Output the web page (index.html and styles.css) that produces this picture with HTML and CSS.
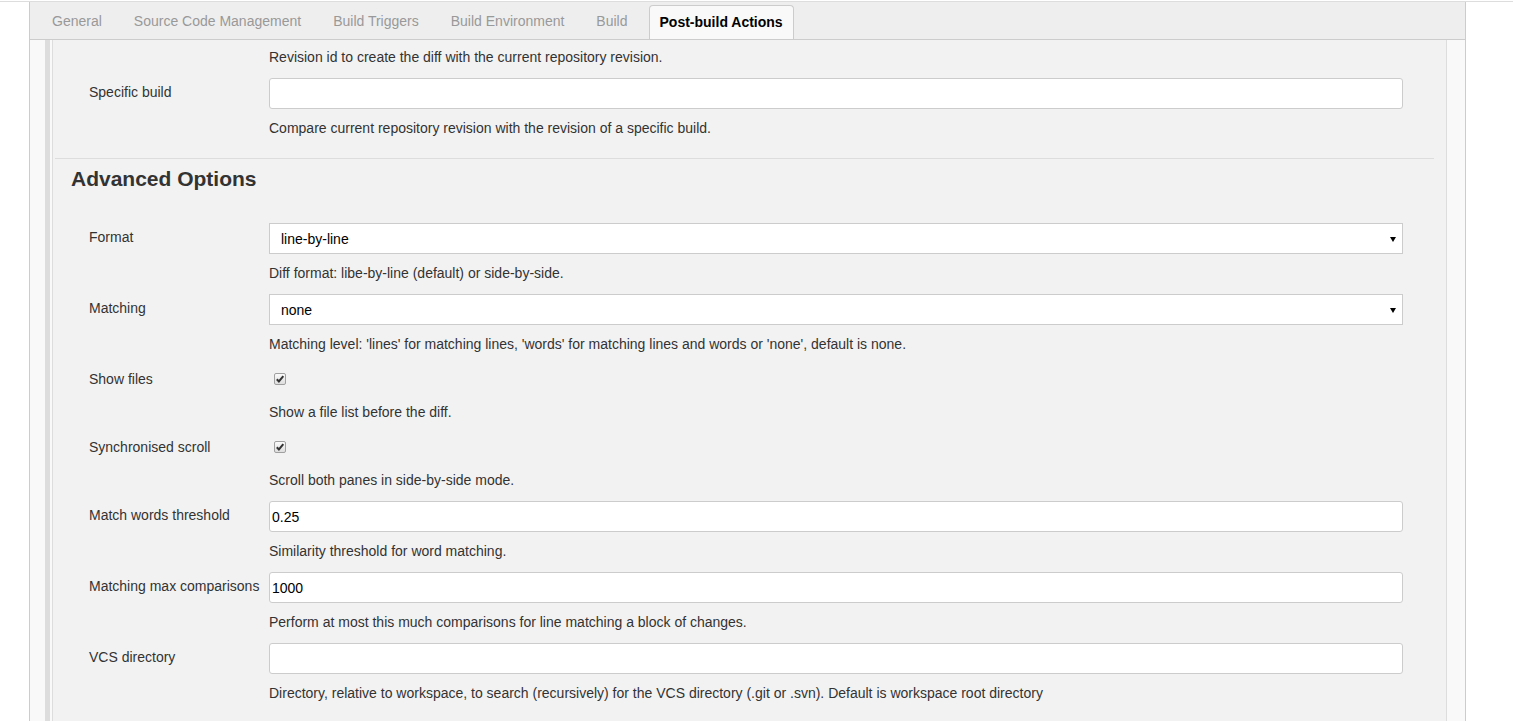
FILE: index.html
```html
<!DOCTYPE html>
<html>
<head>
<meta charset="utf-8">
<link rel="stylesheet" href="styles.css">
</head>
<body>
<div class="topline"></div>
<div class="panel">
  <div class="tabbar">
    <div class="tab">General</div>
    <div class="tab">Source Code Management</div>
    <div class="tab">Build Triggers</div>
    <div class="tab">Build Environment</div>
    <div class="tab">Build</div>
    <div class="tab active">Post-build Actions</div>
  </div>
  <div class="section">
    <div class="inner">
      <div class="desc first">Revision id to create the diff with the current repository revision.</div>
      <div class="row">
        <div class="label">Specific build</div>
        <div class="field"><input class="text" type="text" value=""></div>
      </div>
      <div class="desc">Compare current repository revision with the revision of a specific build.</div>
      <div class="separator"></div>
      <h2 class="heading">Advanced Options</h2>
      <div class="row">
        <div class="label">Format</div>
        <div class="field">
          <div class="select"><span class="value">line-by-line</span><span class="arrow"></span></div>
        </div>
      </div>
      <div class="desc">Diff format: libe-by-line (default) or side-by-side.</div>
      <div class="row">
        <div class="label">Matching</div>
        <div class="field">
          <div class="select"><span class="value">none</span><span class="arrow"></span></div>
        </div>
      </div>
      <div class="desc">Matching level: 'lines' for matching lines, 'words' for matching lines and words or 'none', default is none.</div>
      <div class="row check-row">
        <div class="label">Show files</div>
        <div class="field"><span class="checkbox"><svg width="10" height="10" viewBox="0 0 10 10"><path d="M1.8 5.2 L3.9 7.4 L8.3 2.1" fill="none" stroke="#333" stroke-width="2"/></svg></span></div>
      </div>
      <div class="desc">Show a file list before the diff.</div>
      <div class="row check-row">
        <div class="label">Synchronised scroll</div>
        <div class="field"><span class="checkbox"><svg width="10" height="10" viewBox="0 0 10 10"><path d="M1.8 5.2 L3.9 7.4 L8.3 2.1" fill="none" stroke="#333" stroke-width="2"/></svg></span></div>
      </div>
      <div class="desc">Scroll both panes in side-by-side mode.</div>
      <div class="row">
        <div class="label">Match words threshold</div>
        <div class="field"><input class="text" type="text" value="0.25"></div>
      </div>
      <div class="desc">Similarity threshold for word matching.</div>
      <div class="row">
        <div class="label">Matching max comparisons</div>
        <div class="field"><input class="text" type="text" value="1000"></div>
      </div>
      <div class="desc">Perform at most this much comparisons for line matching a block of changes.</div>
      <div class="row">
        <div class="label">VCS directory</div>
        <div class="field"><input class="text" type="text" value=""></div>
      </div>
      <div class="desc">Directory, relative to workspace, to search (recursively) for the VCS directory (.git or .svn). Default is workspace root directory</div>
    </div>
  </div>
</div>
</body>
</html>
```

FILE: styles.css
```css
html, body {
  margin: 0;
  padding: 0;
  background: #ffffff;
  font-family: "Liberation Sans", Arial, sans-serif;
  font-size: 14px;
  color: #333333;
}
body {
  padding-top: 1px;
  height: 720px;
  overflow: hidden;
}
.topline {
  border-top: 1px solid #dddddd;
}
.panel {
  margin-left: 29px;
  width: 1435px;
  border-left: 1px solid #cccccc;
  border-right: 1px solid #cccccc;
  background: #f9f9f9;
  min-height: 719px;
}
.tabbar {
  display: flex;
  align-items: flex-end;
  gap: 10px;
  height: 37px;
  padding-left: 11px;
  background: #eeeeee;
  border-bottom: 1px solid #cccccc;
}
.tab {
  height: 34px;
  line-height: 33px;
  padding: 0 11px;
  color: #999999;
  white-space: nowrap;
  box-sizing: border-box;
}
.tab.active {
  padding: 0 10px;
  border: 1px solid #cccccc;
  border-bottom: none;
  border-radius: 4px 4px 0 0;
  background: #f9f9f9;
  color: #000000;
  font-weight: bold;
}
.section {
  margin-left: 15px;
  margin-right: 18px;
  border-left: 5px solid #dddddd;
  padding-left: 2px;
}
.inner {
  background: #f2f2f2;
  border-left: 1px solid #dddddd;
  border-right: 1px solid #dddddd;
  padding-bottom: 40px;
}
.row {
  display: flex;
  align-items: flex-start;
  height: 31px;
}
.label {
  width: 216px;
  flex: 0 0 216px;
  box-sizing: border-box;
  padding-left: 36px;
  padding-top: 6px;
  line-height: 17px;
  color: #333333;
  white-space: nowrap;
}
.field {
  width: 1134px;
  flex: 0 0 1134px;
}
.text {
  display: block;
  width: 100%;
  height: 31px;
  box-sizing: border-box;
  margin: 0;
  border: 1px solid #cccccc;
  border-radius: 3px;
  background: #ffffff;
  padding: 0 2px;
  font-family: "Liberation Sans", Arial, sans-serif;
  font-size: 14px;
  color: #000000;
  outline: none;
}
.select {
  position: relative;
  height: 31px;
  box-sizing: border-box;
  border: 1px solid #cccccc;
  background: #ffffff;
  padding-left: 11px;
  line-height: 30px;
  color: #000000;
}
.arrow {
  position: absolute;
  right: 6px;
  top: 13px;
  width: 0;
  height: 0;
  border-left: 3.5px solid transparent;
  border-right: 3.5px solid transparent;
  border-top: 5px solid #000000;
}
.check-row {
  height: 28px;
  align-items: center;
}
.check-row .label {
  padding-top: 0;
}
.check-row .field {
  display: flex;
  align-items: center;
  height: 28px;
}
.checkbox {
  display: flex;
  align-items: center;
  justify-content: center;
  margin-left: 5px;
  width: 12px;
  height: 12px;
  box-sizing: border-box;
  border: 1px solid #a0a0a0;
  border-radius: 2px;
  background: linear-gradient(#fbfbfb, #dedede);
}
.checkbox svg {
  display: block;
}
.desc {
  padding: 9px 0 11px 216px;
  line-height: 20px;
  color: #333333;
  white-space: nowrap;
}
.desc.first {
  padding-top: 7px;
}
.separator {
  margin: 9px 12px 0 2px;
  border-top: 1px solid #dddddd;
}
.heading {
  margin: 8px 0 32px 0;
  padding-left: 18px;
  font-size: 21px;
  line-height: 24px;
  font-weight: bold;
  color: #333333;
}
```
